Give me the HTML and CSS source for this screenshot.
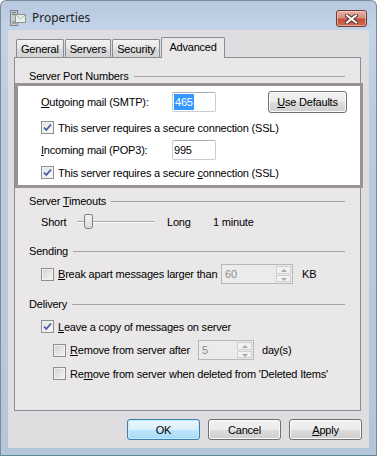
FILE: index.html
```html
<!DOCTYPE html>
<html>
<head>
  <title>Properties</title>
  <meta charset="utf-8">
  <link rel="stylesheet" href="styles.css">
</head>
<body>
  <div class="window">
    <!-- Title bar -->
    <div class="titlebar">
      <svg class="app-icon" width="16" height="16" viewBox="0 0 16 16">
        <rect x="0.5" y="0.5" width="7" height="15" fill="#c9ccd0" stroke="#7c8188"/>
        <rect x="2" y="2" width="4" height="1" fill="#6b7078"/>
        <rect x="2" y="4" width="4" height="1" fill="#6b7078"/>
        <rect x="2" y="11" width="4" height="3" fill="#9aa0a6"/>
        <rect x="5.5" y="4.5" width="10" height="8" fill="#e9eeea" stroke="#8e9792"/>
        <path d="M6 5 L10.5 9 L15 5" fill="none" stroke="#a9b2ad"/>
      </svg>
      <span class="title">Properties</span>
      <div class="close-btn">
        <svg width="13" height="10" viewBox="0 0 13 10">
          <path d="M2 1.5 L11 8.5 M11 1.5 L2 8.5" stroke="#4a2a24" stroke-width="4" stroke-linecap="square"/>
          <path d="M2 1.5 L11 8.5 M11 1.5 L2 8.5" stroke="#ffffff" stroke-width="2" stroke-linecap="square"/>
        </svg>
      </div>
    </div>

    <div class="client">
      <!-- Tabs -->
      <div class="tabs">
        <div class="tab">General</div>
        <div class="tab">Servers</div>
        <div class="tab">Security</div>
        <div class="tab selected">Advanced</div>
      </div>

      <div class="panel">
        <div class="group-label"><span>Server Port Numbers</span><span class="rule"></span></div>

        <div class="highlight">
          <div class="row port-row">
            <span class="port-label"><u>O</u>utgoing mail (SMTP):</span>
            <span class="textbox"><span class="sel">465</span></span>
            <span class="btn defaults"><span><u>U</u>se Defaults</span></span>
          </div>
          <div class="row check-row gap8">
            <span class="check checked"><svg width="11" height="11" viewBox="0 0 11 11"><path d="M2 5.5 L4.3 8 L9 2.5" fill="none" stroke="#4558a0" stroke-width="1.8"/></svg></span>
            <span>This server requires a secure connection (SSL)</span>
          </div>
          <div class="row port-row short gap6">
            <span class="port-label"><u>I</u>ncoming mail (POP3):</span>
            <span class="textbox">995</span>
          </div>
          <div class="row check-row gap6">
            <span class="check checked"><svg width="11" height="11" viewBox="0 0 11 11"><path d="M2 5.5 L4.3 8 L9 2.5" fill="none" stroke="#4558a0" stroke-width="1.8"/></svg></span>
            <span>This server requires a secure <u>c</u>onnection (SSL)</span>
          </div>
        </div>

        <div class="group-label timeouts"><span>Server <u>T</u>imeouts</span><span class="rule"></span></div>
        <div class="row slider-row">
          <span class="slider-short">Short</span>
          <span class="track"><span class="thumb"></span></span>
          <span class="slider-long">Long</span>
          <span>1 minute</span>
        </div>

        <div class="group-label sending"><span>Sending</span><span class="rule"></span></div>
        <div class="row spin-row break-row">
          <span class="check"></span>
          <span class="break-text"><u>B</u>reak apart messages larger than</span>
          <span class="spin wide">
            <span class="spin-val">60</span>
            <span class="spin-btns"><span class="up"></span><span class="down"></span></span>
          </span>
          <span class="unit">KB</span>
        </div>

        <div class="group-label delivery"><span>Delivery</span><span class="rule"></span></div>
        <div class="row check-row leave-row">
          <span class="check checked"><svg width="11" height="11" viewBox="0 0 11 11"><path d="M2 5.5 L4.3 8 L9 2.5" fill="none" stroke="#4558a0" stroke-width="1.8"/></svg></span>
          <span><u>L</u>eave a copy of messages on server</span>
        </div>
        <div class="row spin-row nested gap7">
          <span class="check"></span>
          <span class="after-text"><u>R</u>emove from server after</span>
          <span class="spin narrow">
            <span class="spin-val">5</span>
            <span class="spin-btns"><span class="up"></span><span class="down"></span></span>
          </span>
          <span class="unit days">day(s)</span>
        </div>
        <div class="row check-row nested gap7">
          <span class="check"></span>
          <span>Re<u>m</u>ove from server when deleted from 'Deleted Items'</span>
        </div>
      </div>

      <div class="buttons">
        <span class="btn default">OK</span>
        <span class="btn">Cancel</span>
        <span class="btn"><span><u>A</u>pply</span></span>
      </div>
    </div>
  </div>
</body>
</html>
```

FILE: styles.css
```css
body {
  margin: 0;
  font-family: "Liberation Sans", Arial, sans-serif;
  font-size: 11px;
  letter-spacing: -0.2px;
  color: #000;
}
u {
  text-decoration: underline;
  text-underline-offset: 1px;
}
.window {
  width: 377px;
  height: 456px;
  box-sizing: border-box;
  border: 1px solid #7f8a98;
  border-bottom-color: #5d8791;
  border-radius: 6px 6px 0 0;
  background: linear-gradient(to bottom, #b7c9df, #c3d3e7 28px, #b9cce2 120px, #b3c6dc);
  display: flex;
  flex-direction: column;
  overflow: hidden;
}

/* title bar */
.titlebar {
  height: 29px;
  flex: none;
  box-sizing: border-box;
  padding: 9px 9px 0 9px;
  display: flex;
  align-items: flex-start;
}
.app-icon {
  flex: none;
}
.title {
  margin-left: 6px;
  font-family: "Noto Sans", "Open Sans", sans-serif;
  font-size: 12px;
  letter-spacing: 0;
  line-height: 16px;
  color: #1e1e1e;
}
.close-btn {
  margin-left: auto;
  width: 31px;
  height: 17px;
  box-sizing: border-box;
  border: 1px solid #6b3a35;
  border-radius: 3px;
  background: linear-gradient(to bottom, #e8b4a8, #d78a79 45%, #c3513c 55%, #cf6a52);
  box-shadow: inset 0 0 0 1px rgba(255, 230, 220, 0.5);
  display: flex;
  align-items: center;
  justify-content: center;
}

/* client area */
.client {
  height: 418px;
  margin: 0 7px;
  box-sizing: border-box;
  background: #dfdddf;
  padding: 7px 8px 0 6px;
}
.tabs {
  display: flex;
  gap: 1px;
  padding-left: 2px;
  height: 21px;
  align-items: flex-start;
  position: relative;
  z-index: 1;
}
.tab {
  margin-top: 2px;
  height: 18px;
  box-sizing: border-box;
  border: 1px solid #898c95;
  border-bottom: none;
  border-radius: 2px 2px 0 0;
  background: linear-gradient(to bottom, #f3f3f3, #e6e6e6 50%, #d9d9d9 51%, #d4d4d4);
  line-height: 18px;
  padding: 0 4px;
}
.tab.selected {
  margin-top: 0;
  height: 21px;
  line-height: 18px;
  background: #e9e7e8;
  padding: 0 7px;
}
.panel {
  margin-top: -1px;
  height: 354px;
  box-sizing: border-box;
  border: 1px solid #898c95;
  background: #e9e7e8;
  padding: 12px 15px 0 14px;
}

/* group headers */
.group-label {
  display: flex;
  align-items: center;
  height: 13px;
  line-height: 13px;
}
.rule {
  flex: 1;
  height: 1px;
  background: #a3a2a5;
  margin-left: 5px;
}
.group-label.timeouts { margin-top: 7px; }
.group-label.sending { margin-top: 16px; }
.group-label.delivery { margin-top: 14px; }

.row {
  display: flex;
  align-items: center;
  padding-left: 12px;
  white-space: nowrap;
}
.row.nested { padding-left: 24px; }
.gap6 { margin-top: 6px; }
.gap7 { margin-top: 7px; }
.gap8 { margin-top: 8px; }

/* highlighted box */
.highlight {
  position: relative;
  margin: 0 -18px 0 -14px;
  border: 3px solid #9b9297;
  background: #fff;
  padding: 5px 0 6px 11px;
}
.port-row {
  height: 22px;
}
.port-row.short {
  height: 20px;
}
.port-label {
  width: 131px;
}
.textbox {
  width: 44px;
  height: 20px;
  box-sizing: border-box;
  border: 1px solid #c9ced6;
  border-top-color: #a9aeb6;
  border-radius: 2px;
  background: #fff;
  padding: 1px 0 0 1px;
  line-height: 16px;
}
.sel {
  display: inline-block;
  background: #3399ff;
  color: #fff;
  padding: 0 1px;
  line-height: 16px;
}
.btn {
  display: inline-flex;
  align-items: center;
  justify-content: center;
  box-sizing: border-box;
  border: 1px solid #707070;
  border-radius: 3px;
  background: linear-gradient(to bottom, #f2f2f2, #ebebeb 50%, #dddddd 51%, #cfcfcf);
  box-shadow: inset 0 0 0 1px #fbfbfb;
}
.defaults {
  margin-left: 52px;
  width: 79px;
  height: 22px;
}
.check-row {
  height: 13px;
}
.check {
  flex: none;
  width: 13px;
  height: 13px;
  box-sizing: border-box;
  border: 1px solid #8e8f8f;
  background: linear-gradient(135deg, #cfd0d2, #f6f6f6);
  box-shadow: inset 0 0 0 1px #f1f1f1;
  margin-right: 4px;
  display: flex;
  align-items: center;
  justify-content: center;
}
.check.checked {
  background: linear-gradient(135deg, #e2e3e5, #fafafa);
}

/* slider */
.slider-row {
  margin-top: 6px;
  height: 15px;
}
.slider-short {
  width: 36px;
}
.track {
  position: relative;
  width: 77px;
  height: 1px;
  background: #a5a5a5;
  border-bottom: 1px solid #fff;
}
.thumb {
  position: absolute;
  left: 7px;
  top: -7px;
  width: 7px;
  height: 13px;
  border: 1px solid #808080;
  border-radius: 2px 2px 3px 3px;
  background: linear-gradient(to bottom, #f4f4f4, #d9d9d9);
}
.slider-long {
  margin-left: 13px;
  width: 46px;
}

/* spin boxes */
.spin-row {
  height: 20px;
}
.break-row {
  margin-top: 6px;
}
.break-text {
  width: 163px;
}
.after-text {
  width: 128px;
}
.spin {
  height: 20px;
  box-sizing: border-box;
  border: 1px solid #b7b6b8;
  background: #ecebec;
  color: #8d8d8d;
  display: flex;
  align-items: center;
  padding-left: 3px;
}
.spin.wide { width: 72px; }
.spin.narrow { width: 56px; }
.spin-val {
  flex: 1;
}
.spin-btns {
  width: 15px;
  height: 16px;
  margin-right: 1px;
  display: flex;
  flex-direction: column;
  gap: 1px;
}
.spin-btns span {
  flex: 1;
  border: 1px solid #cfcfcf;
  background: #f2f2f2;
  position: relative;
}
.spin-btns .up::after,
.spin-btns .down::after {
  content: "";
  position: absolute;
  left: 4px;
  top: 2px;
  border-left: 3px solid transparent;
  border-right: 3px solid transparent;
}
.spin-btns .up::after {
  border-bottom: 3px solid #a8a8a8;
}
.spin-btns .down::after {
  border-top: 3px solid #a8a8a8;
}
.unit {
  margin-left: 9px;
}
.unit.days {
  margin-left: 8px;
}
.leave-row {
  margin-top: 9px;
}

/* dialog buttons */
.buttons {
  display: flex;
  justify-content: flex-end;
  gap: 8px;
  margin-top: 8px;
  margin-right: -1px;
}
.buttons .btn {
  width: 73px;
  height: 21px;
}
.buttons .btn.default {
  border-color: #3c7fb1;
  background: linear-gradient(to bottom, #eaf6fd, #d9f0fc 50%, #bee6fd 51%, #a7d9f5);
  box-shadow: inset 0 0 0 1px #c8eafc;
}
```
